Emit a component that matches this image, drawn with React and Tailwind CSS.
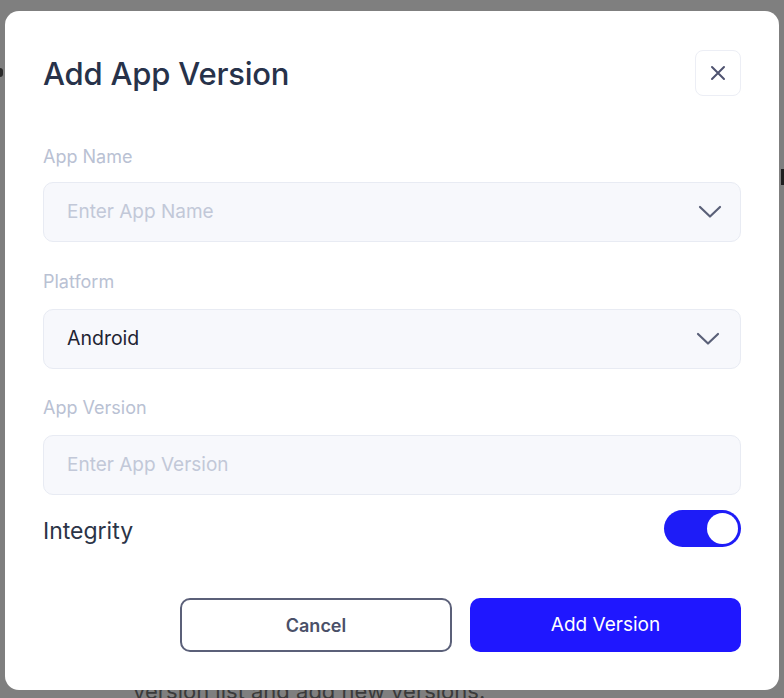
import React from "react";

function Chevron() {
  return (
    <svg width="24" height="14" viewBox="0 0 24 14" fill="none">
      <path d="M2 2 L12 11.5 L22 2" stroke="#5a6078" strokeWidth="2.2" strokeLinecap="round" strokeLinejoin="round" />
    </svg>
  );
}

export default function App() {
  return (
    <div className="relative h-[698px] w-[784px] overflow-hidden bg-[#7f7f7f]" style={{ fontFamily: "Inter, 'Noto Sans', sans-serif" }}>
      <div className="absolute left-[133px] top-[675px] text-[22px] leading-[33px] text-[#3a3a3a] whitespace-nowrap">
        version list and add new versions.
      </div>
      <div className="absolute left-0 top-[68px] h-[9px] w-[3px] bg-[#2a2a2a] rounded-r" />
      <div className="absolute right-0 top-[169px] h-[16px] w-[3px] bg-[#1f1f1f]" />

      <div className="absolute left-[5px] top-[11px] w-[774px] h-[679px] rounded-[14px] bg-white px-[38px] pt-[39px]">
        <div className="flex h-[46px] items-center justify-between">
          <h1 className="text-[31px] font-medium leading-none text-[#27324a] tracking-[-0.2px]">Add App Version</h1>
          <button className="flex h-[46px] w-[46px] items-center justify-center rounded-[8px] border border-[#eceef5] bg-white">
            <svg width="18" height="18" viewBox="0 0 18 18" fill="none">
              <path d="M3 3 L15 15 M15 3 L3 15" stroke="#4f5370" strokeWidth="2" strokeLinecap="round" />
            </svg>
          </button>
        </div>

        <div className="mt-[49px] text-[18px] leading-[24px] text-[#b9c1d3]">App Name</div>
        <div className="mt-[13px] flex h-[60px] items-center justify-between rounded-[10px] border border-[#e8ebf3] bg-[#f7f8fc] pl-[23px] pr-[18px]">
          <span className="text-[19px] text-[#c2c8d8]">Enter App Name</span>
          <Chevron />
        </div>

        <div className="mt-[28px] text-[18px] leading-[24px] text-[#b9c1d3]">Platform</div>
        <div className="mt-[15px] flex h-[60px] items-center justify-between rounded-[10px] border border-[#e8ebf3] bg-[#f7f8fc] pl-[23px] pr-[20px]">
          <span className="text-[19.5px] text-[#1f2433]">Android</span>
          <Chevron />
        </div>

        <div className="mt-[27px] text-[18px] leading-[24px] text-[#b9c1d3]">App Version</div>
        <div className="mt-[15px] flex h-[60px] items-center rounded-[10px] border border-[#e8ebf3] bg-[#f7f8fc] pl-[23px]">
          <span className="text-[19px] text-[#c2c8d8]">Enter App Version</span>
        </div>

        <div className="mt-[15px] flex h-[37px] items-center justify-between">
          <span className="pt-[5px] text-[23px] text-[#2b3447]">Integrity</span>
          <div className="flex h-[37px] w-[77px] items-center justify-end rounded-full bg-[#1e1cf7] pr-[3px]">
            <div className="h-[31px] w-[31px] rounded-full bg-white" />
          </div>
        </div>

        <div className="mt-[51px] flex justify-end gap-[18px]">
          <button className="h-[54px] w-[272px] rounded-[10px] border-2 border-[#5b6079] bg-white text-[18px] font-semibold text-[#4a5068]">
            Cancel
          </button>
          <button className="h-[54px] w-[271px] rounded-[10px] bg-[#1f17ff] text-[19px] font-normal text-white">
            Add Version
          </button>
        </div>
      </div>
    </div>
  );
}
